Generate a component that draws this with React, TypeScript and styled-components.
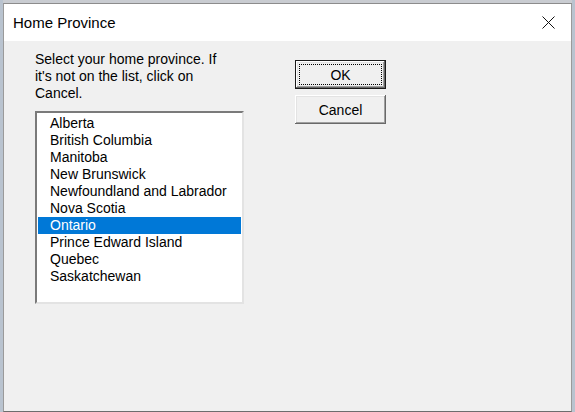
import React, { useState } from "react";
import styled, { createGlobalStyle } from "styled-components";

const GlobalStyle = createGlobalStyle`
  html, body {
    margin: 0;
    padding: 0;
    background: #c9ccd1;
    font-family: "Liberation Sans", Arial, sans-serif;
  }
`;

const provinces = [
  "Alberta",
  "British Columbia",
  "Manitoba",
  "New Brunswick",
  "Newfoundland and Labrador",
  "Nova Scotia",
  "Ontario",
  "Prince Edward Island",
  "Quebec",
  "Saskatchewan",
];

const App: React.FC = () => {
  const [selected, setSelected] = useState("Ontario");

  return (
    <>
      <GlobalStyle />
      <Stage>
        <Window>
          <TitleBar>
            <Title>Home Province</Title>
            <CloseButton aria-label="Close">
              <svg width="13" height="13" viewBox="0 0 13 13">
                <path d="M0.5 0.5 L12.5 12.5 M12.5 0.5 L0.5 12.5" stroke="#111" strokeWidth="1" fill="none" />
              </svg>
            </CloseButton>
          </TitleBar>

          <Body>
            <LeftColumn>
              <Prompt>
                Select your home province. If
                <br />
                it's not on the list, click on
                <br />
                Cancel.
              </Prompt>
              <ListBox>
                {provinces.map((p) => (
                  <ListItem key={p} active={p === selected} onClick={() => setSelected(p)}>
                    {p}
                  </ListItem>
                ))}
              </ListBox>
            </LeftColumn>

            <ButtonColumn>
              <DialogButton isDefault>
                <FocusRing>OK</FocusRing>
              </DialogButton>
              <DialogButton>Cancel</DialogButton>
            </ButtonColumn>
          </Body>
        </Window>
      </Stage>
    </>
  );
};

const Stage = styled.div`
  width: 575px;
  height: 412px;
  padding: 3px 3px 0 3px;
  box-sizing: border-box;
  background: linear-gradient(90deg, #b9c3cf 0 3px, transparent 3px calc(100% - 3px), #b9c3cf calc(100% - 3px));
`;

const Window = styled.div`
  width: 569px;
  height: 409px;
  box-sizing: border-box;
  border: 1px solid #9a9a9a;
  border-bottom-color: #6d6d6d;
  border-top-color: #8c8c8c;
  background: #f0f0f0;
  display: flex;
  flex-direction: column;
`;

const TitleBar = styled.div`
  height: 37px;
  flex-shrink: 0;
  background: #ffffff;
  display: flex;
  align-items: center;
  justify-content: space-between;
  padding: 0 16px 0 9px;
`;

const Title = styled.div`
  font-size: 15px;
  color: #000;
  margin-top: -1px;
`;

const CloseButton = styled.div`
  width: 13px;
  height: 13px;
  display: flex;
  margin-top: -1px;
`;

const Body = styled.div`
  flex: 1;
  display: flex;
  gap: 51px;
  padding: 10px 0 0 31px;
`;

const LeftColumn = styled.div`
  width: 209px;
  display: flex;
  flex-direction: column;
  gap: 9px;
`;

const Prompt = styled.div`
  font-size: 14px;
  line-height: 17px;
  color: #000;
`;

const ListBox = styled.div`
  height: 193px;
  box-sizing: border-box;
  background: #fff;
  border-top: 2px solid #7a7a7a;
  border-left: 2px solid #7a7a7a;
  border-right: 2px solid #e3e3e3;
  border-bottom: 2px solid #e3e3e3;
  padding: 2px 1px 0 1px;
`;

const ListItem = styled.div<{ active?: boolean }>`
  height: 17px;
  line-height: 17px;
  font-size: 14px;
  padding-left: 12px;
  cursor: default;
  color: ${(p) => (p.active ? "#fff" : "#000")};
  background: ${(p) => (p.active ? "#0078d7" : "transparent")};
`;

const ButtonColumn = styled.div`
  display: flex;
  flex-direction: column;
  gap: 6px;
  padding-top: 9px;
`;

const DialogButton = styled.div<{ isDefault?: boolean }>`
  width: 91px;
  height: 29px;
  box-sizing: border-box;
  display: flex;
  align-items: center;
  justify-content: center;
  font-size: 14px;
  color: #000;
  background: #f0f0f0;
  border: ${(p) => (p.isDefault ? "1px solid #1a1a1a" : "none")};
  box-shadow: inset -1px -1px #696969, inset 1px 1px #ffffff, inset -2px -2px #a0a0a0,
    inset 2px 2px #e3e3e3;
  padding: ${(p) => (p.isDefault ? "3px" : "0")};
`;

const FocusRing = styled.div`
  flex: 1;
  align-self: stretch;
  display: flex;
  align-items: center;
  justify-content: center;
  border: 1px dotted #000;
`;

export default App;
